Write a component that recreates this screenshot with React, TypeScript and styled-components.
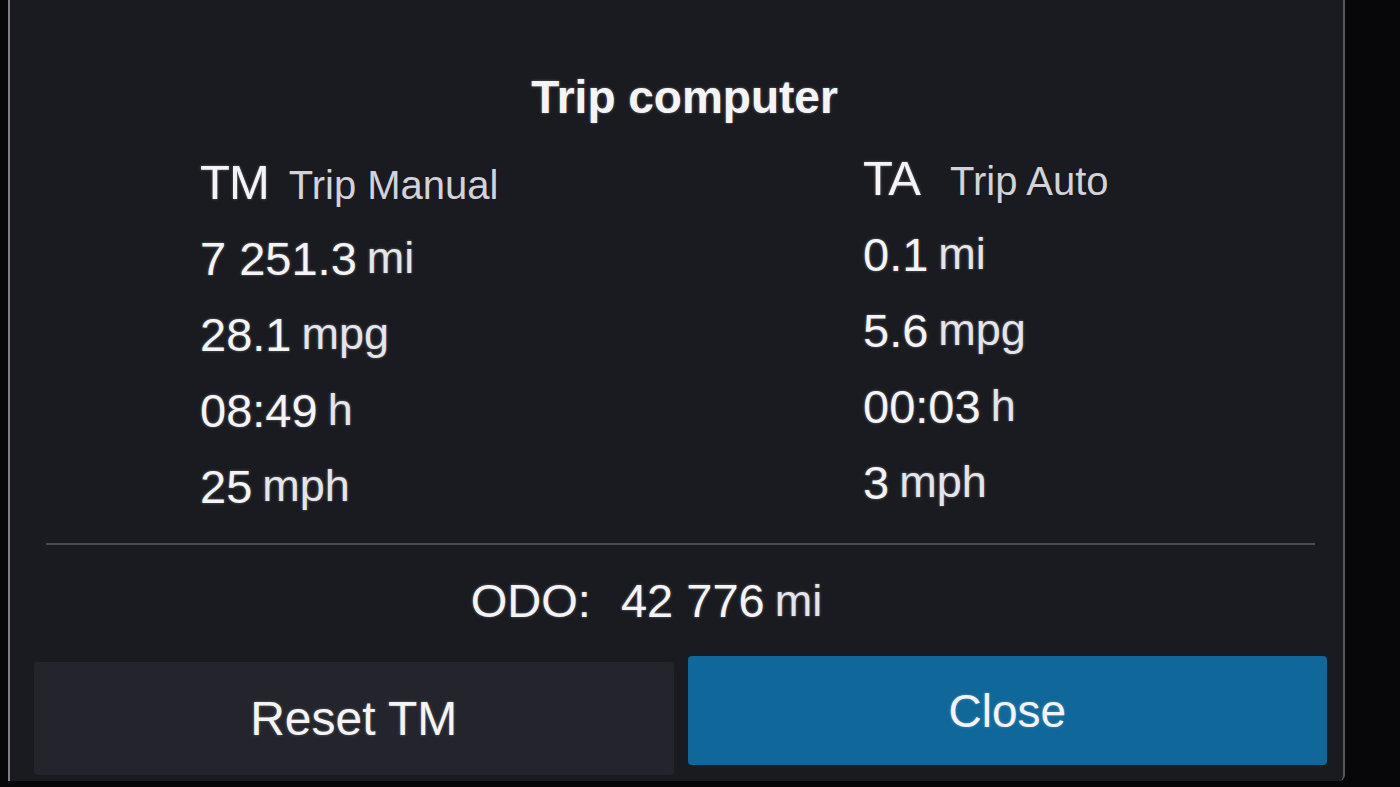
import styled, { createGlobalStyle } from 'styled-components';

const GlobalStyle = createGlobalStyle`
    html, body {
        margin: 0;
        padding: 0;
        background: #070709;
        overflow: hidden;
    }
    body {
        font-family: "Liberation Sans", Arial, sans-serif;
        color: #f4f4f6;
    }
`;

const Screen = styled.div`
    width: 1400px;
    height: 787px;
    background: #070709;
    display: flex;
    align-items: flex-start;
    padding-left: 8px;
    box-sizing: border-box;
`;

const Panel = styled.div`
    width: 1337px;
    height: 781px;
    background: #1a1a21;
    border-left: 2px solid #7d7d84;
    border-right: 2px solid #55555c;
    border-bottom-right-radius: 6px;
    box-sizing: border-box;
    display: flex;
    flex-direction: column;
`;

const Title = styled.h1`
    margin: 0;
    padding-top: 70px;
    height: 120px;
    box-sizing: border-box;
    text-align: center;
    font-size: 46px;
    font-weight: 700;
    padding-left: 16px;
    text-shadow: 0 0 3px rgba(255, 255, 255, 0.35);
`;

const Columns = styled.div`
    display: grid;
    grid-template-columns: 663px 1fr;
    padding-left: 190px;
`;

const Column = styled.div<{ $lift?: number }>`
    display: flex;
    flex-direction: column;
    margin-top: ${p => -(p.$lift ?? 0)}px;
`;

const Head = styled.div<{ $gap: number }>`
    display: flex;
    align-items: baseline;
    gap: ${p => p.$gap}px;
    height: 100px;
    padding-top: 34px;
    box-sizing: border-box;
`;

const Code = styled.span`
    font-size: 49px;
    letter-spacing: -1px;
    text-shadow: 0 0 3px rgba(255, 255, 255, 0.35);
`;

const Label = styled.span`
    font-size: 40px;
    color: #d2d2d8;
`;

const Row = styled.div`
    height: 76px;
    display: flex;
    align-items: center;
    font-size: 47px;
    text-shadow: 0 0 3px rgba(255, 255, 255, 0.35);
`;

const Unit = styled.span`
    margin-left: 10px;
    font-size: 45px;
    color: #e4e4ea;
`;

const Divider = styled.hr`
    margin: 19px 28px 0 36px;
    border: none;
    height: 2px;
    background: #4a4a52;
`;

const Odo = styled.div`
    height: 111px;
    display: flex;
    align-items: center;
    justify-content: center;
    padding-right: 60px;
    font-size: 47px;
    text-shadow: 0 0 3px rgba(255, 255, 255, 0.35);
`;

const OdoLabel = styled.span`
    margin-right: 30px;
`;

const Buttons = styled.div`
    display: flex;
    gap: 14px;
    padding: 0 16px 0 24px;
    align-items: flex-start;
`;

const Button = styled.button<{ $primary?: boolean }>`
    flex: 1;
    height: ${p => (p.$primary ? 109 : 113)}px;
    margin-top: ${p => (p.$primary ? 0 : 6)}px;
    border: none;
    border-radius: 4px;
    background: ${p => (p.$primary ? '#0f679a' : '#24242c')};
    color: #f4f4f6;
    font-family: "Liberation Sans", Arial, sans-serif;
    font-size: ${p => (p.$primary ? 46 : 48)}px;
    text-shadow: 0 0 3px rgba(255, 255, 255, 0.3);
`;

type Stat = { value: string; unit: string };

const manual: Stat[] = [
    { value: '7 251.3', unit: 'mi' },
    { value: '28.1', unit: 'mpg' },
    { value: '08:49', unit: 'h' },
    { value: '25', unit: 'mph' },
];

const auto: Stat[] = [
    { value: '0.1', unit: 'mi' },
    { value: '5.6', unit: 'mpg' },
    { value: '00:03', unit: 'h' },
    { value: '3', unit: 'mph' },
];

const TripColumn = ({ code, label, stats, gap, lift }: { code: string; label: string; stats: Stat[]; gap: number; lift?: number }) => (
    <Column $lift={lift}>
        <Head $gap={gap}>
            <Code>{code}</Code>
            <Label>{label}</Label>
        </Head>
        {stats.map(s => (
            <Row key={s.unit}>
                {s.value}
                <Unit>{s.unit}</Unit>
            </Row>
        ))}
    </Column>
);

export default function App() {
    return (
        <>
            <GlobalStyle />
            <Screen>
                <Panel>
                    <Title>Trip computer</Title>
                    <Columns>
                        <TripColumn code="TM" label="Trip Manual" stats={manual} gap={20} />
                        <TripColumn code="TA" label="Trip Auto" stats={auto} gap={30} lift={4} />
                    </Columns>
                    <Divider />
                    <Odo>
                        <OdoLabel>ODO:</OdoLabel>
                        42 776
                        <Unit>mi</Unit>
                    </Odo>
                    <Buttons>
                        <Button>Reset TM</Button>
                        <Button $primary>Close</Button>
                    </Buttons>
                </Panel>
            </Screen>
        </>
    );
}
